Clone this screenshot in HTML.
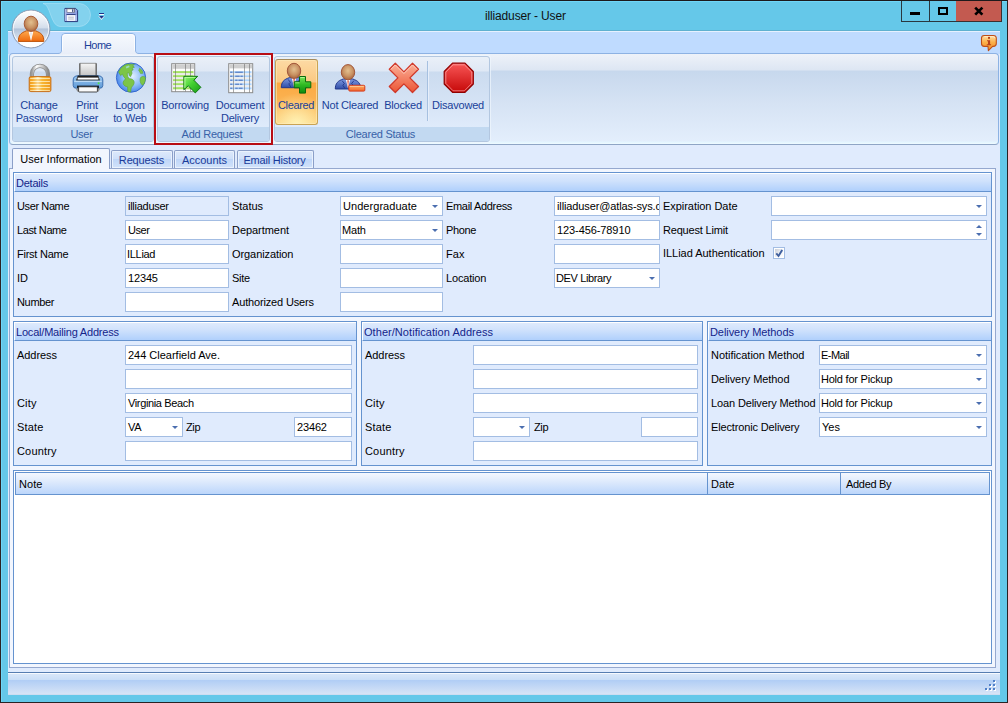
<!DOCTYPE html>
<html>
<head>
<meta charset="utf-8">
<title>illiaduser - User</title>
<style>
html,body{margin:0;padding:0;}
body{width:1008px;height:703px;overflow:hidden;background:#65c8e9;font-family:"Liberation Sans",sans-serif;font-size:11px;color:#000;position:relative;}
*{box-sizing:border-box;}
.abs{position:absolute;}
#frame{position:absolute;left:0;top:0;width:1008px;height:703px;border:1px solid #2a2324;border-top-color:#1d1a1c;}
#frame-hl{position:absolute;left:1px;top:1px;width:1006px;height:701px;border-top:1px solid #6fd6f8;border-left:1px solid #6fd6f8;}
#title{position:absolute;left:485px;top:9px;width:90px;height:15px;line-height:15px;font-size:12px;letter-spacing:-0.15px;color:#111;white-space:nowrap;}
/* window buttons */
#wbtns{position:absolute;left:901px;top:1px;width:103px;height:21px;}
#wbtns div{position:absolute;top:0;height:21px;border:1px solid #29373f;border-top:none;}
#bmin{left:0;width:29px;background:#65c8e9;}
#bmax{left:29px;width:26px;background:#65c8e9;border-left:none!important;border-right:none!important;}
#bcls{left:55px;width:46px;background:#c35a50;border-left:none!important;border-color:#3d2f30!important;}
/* client */
#client{position:absolute;left:8px;top:31px;width:992px;height:664px;background:#e0ebfd;}
#tabhdr{position:absolute;left:0;top:0;width:992px;height:23px;background:#bfdbff;border-top:1px solid #e6f1ff;}
#hometab{position:absolute;left:53px;top:3px;width:75px;height:21px;color:#1a3f99;text-align:center;line-height:23px;letter-spacing:-0.6px;padding-right:2px;z-index:3;}
#ribbon{position:absolute;left:1px;top:22px;width:990px;height:92px;border:1px solid #8db2e3;border-bottom-color:#8fa5c5;border-radius:4px;background:linear-gradient(to bottom,#eef2f9 0px,#dde6f3 16px,#c7d8ed 17px,#d6e3f4 50px,#e3eefc 87px,#e2f5ff 88px,#effaff 90px);}
.rgroup{position:absolute;top:2px;height:86px;border:1px solid #b3c7e0;border-radius:3px;background:linear-gradient(to bottom,#eaf0f8 0px,#dfe8f5 14px,#cbdbef 15px,#d5e3f5 45px,#dfebfb 70px);box-shadow:0 0 0 1px rgba(240,246,253,.7);overflow:hidden;}
.rgroup .cap{position:absolute;left:0;right:0;bottom:0;height:14px;background:#c2d9f1;color:#3862a8;text-align:center;line-height:14px;letter-spacing:-0.25px;padding-right:3px;}
.rlabel{position:absolute;letter-spacing:-0.2px;color:#1a3f99;text-align:center;line-height:13px;white-space:nowrap;}
/* tab control */
.tab{position:absolute;height:18px;top:119px;border:1px solid #8b9fc8;border-bottom:none;border-radius:2px 2px 0 0;background:linear-gradient(#dde9fb 0,#cfe0fa 45%,#bfd6f8 50%,#d2e3fb 100%);color:#1a3a98;text-align:center;line-height:19px;box-shadow:inset 0 0 0 1px #eaf2fd;}
.tab.act{top:117px;height:21px;background:#f2f6fe;color:#000;line-height:21px;box-shadow:none;border-color:#8b9fc8;}
#page{position:absolute;left:1px;top:137px;width:987px;height:500px;border:1px solid #95a8cf;background:#f2f6fe;}
#notes{position:absolute;left:5px;top:439px;width:979px;height:194px;border:1px solid #6593cf;background:#fff;}
.nh{position:absolute;top:1px;height:23px;border:1px solid #6593cf;background:linear-gradient(#f4f8ff,#dce9fc 45%,#bcd6fb);line-height:22px;padding-left:3px;}
.chk{position:absolute;width:13px;height:13px;border:1px solid #8ea7cf;background:linear-gradient(135deg,#c8d3e6,#f4f7fc);}

.grp{position:absolute;border:1px solid #6593cf;background:#e0ebfd;}
.grp .hd{position:absolute;left:0;right:0;top:0;height:19px;border:1px solid #fff;border-bottom:1px solid #6593cf;border-right:none;background:linear-gradient(#deeafd,#d0e2fc 40%,#b0d0fc);color:#14248a;line-height:18px;padding-left:1px;}
.lb{position:absolute;height:20px;line-height:21px;white-space:nowrap;}
.in{position:absolute;height:20px;border:1px solid #a3bde3;background:#fff;line-height:19px;padding-left:2px;white-space:nowrap;overflow:hidden;}
.in.ro{background:#e0ebfd;}
.dd:after{content:"";position:absolute;right:4px;top:8px;border-left:3px solid transparent;border-right:3px solid transparent;border-top:3px solid #4b6eaf;}
.spin:before{content:"";position:absolute;right:4px;top:4px;border-left:3px solid transparent;border-right:3px solid transparent;border-bottom:3px solid #4b6eaf;}
.spin:after{content:"";position:absolute;right:4px;top:12px;border-left:3px solid transparent;border-right:3px solid transparent;border-top:3px solid #4b6eaf;}
#status{position:absolute;left:0;top:641px;width:992px;height:23px;border-top:1px solid #567db1;background:linear-gradient(#f6f9fe 0,#f6f9fe 1px,#d8e6f9 1px,#c9ddf7 7px,#b0cdf5 7px,#d7e4f6 21px,#c5d6ec 22px);}
</style>
</head>
<body>
<div id="frame"></div><div id="frame-hl"></div>
<div id="title">illiaduser - User</div>
<div id="wbtns"><div id="bmin"></div><div id="bmax"></div><div id="bcls"></div></div>

<div class="abs" style="left:8px;top:30px;width:992px;height:1px;background:#5fb1d0;"></div>
<div id="client">
  <div id="tabhdr"></div>
  <svg class="abs" style="left:49px;top:1px;z-index:2" width="84" height="23" viewBox="0 0 84 23">
    <defs><linearGradient id="gTab" x1="0" x2="0" y1="0" y2="1"><stop offset="0" stop-color="#f6f9fe"/><stop offset="1" stop-color="#e8eef8"/></linearGradient></defs>
    <path d="M1 21.5 C3.5 21.5 4.5 20.5 4.5 18 V5 Q4.5 1.5 8 1.5 H75 Q78.5 1.5 78.5 5 V18 C78.5 20.5 79.5 21.5 82 21.5 V22 H1 Z" fill="url(#gTab)"/>
    <path d="M1 21.5 C3.5 21.5 4.5 20.5 4.5 18 V5 Q4.5 1.5 8 1.5 H75 Q78.5 1.5 78.5 5 V18 C78.5 20.5 79.5 21.5 82 21.5" fill="none" stroke="#8db2e3" stroke-width="1"/>
    <path d="M5.5 18.5 V5.5 Q5.5 2.5 8.5 2.5 H74.5 Q77.5 2.5 77.5 5.5 V18.5" fill="none" stroke="#ffffff" stroke-opacity=".8" stroke-width="1"/>
  </svg>
  <div id="hometab">Home</div>
  <div id="ribbon">
    <div class="rgroup" style="left:2px;width:142px;"><div class="cap">User</div></div>
    <div class="rgroup" style="left:147px;width:113px;"><div class="cap">Add Request</div></div>
    <div class="rgroup" style="left:264px;width:216px;"><div class="cap">Cleared Status</div></div>
  </div>

<!-- RIBBON ITEMS (coords relative to client: abs-8, abs-31) -->
<svg width="0" height="0" style="position:absolute"><defs>
  <linearGradient id="gGold" x1="0" x2="1" y1="0" y2="0"><stop offset="0" stop-color="#ee941c"/><stop offset=".15" stop-color="#fdb52f"/><stop offset=".4" stop-color="#fff6d2"/><stop offset=".6" stop-color="#fec63f"/><stop offset="1" stop-color="#ef981e"/></linearGradient>
  <linearGradient id="gSteel" x1="0" x2="1" y1="0" y2="0"><stop offset="0" stop-color="#9a9a9a"/><stop offset=".3" stop-color="#ffffff"/><stop offset=".7" stop-color="#c4c4c4"/><stop offset="1" stop-color="#8a8a8a"/></linearGradient>
  <linearGradient id="gPaper" x1="0" x2="0" y1="0" y2="1"><stop offset="0" stop-color="#f6f6f6"/><stop offset="1" stop-color="#bdbdbd"/></linearGradient>
  <linearGradient id="gPrn" x1="0" x2="0" y1="0" y2="1"><stop offset="0" stop-color="#9cc7f0"/><stop offset="1" stop-color="#5e9ad6"/></linearGradient>
  <radialGradient id="gGlobe" cx=".55" cy=".45" r=".6"><stop offset="0" stop-color="#e3f0ff"/><stop offset=".55" stop-color="#8dbdf7"/><stop offset="1" stop-color="#3f7fe6"/></radialGradient>
  <linearGradient id="gGreen" x1="0" x2="1" y1="0" y2="1"><stop offset="0" stop-color="#98f573"/><stop offset=".45" stop-color="#45d232"/><stop offset="1" stop-color="#189a16"/></linearGradient>
  <radialGradient id="gHead" cx=".5" cy=".4" r=".6"><stop offset="0" stop-color="#e3c08f"/><stop offset=".6" stop-color="#c99364"/><stop offset="1" stop-color="#a9663e"/></radialGradient>
  <linearGradient id="gSuit" x1="0" x2="0" y1="0" y2="1"><stop offset="0" stop-color="#7e9ae0"/><stop offset="1" stop-color="#2f4da8"/></linearGradient>
  <linearGradient id="gPlus" x1="0" x2="0" y1="0" y2="1"><stop offset="0" stop-color="#7ee35c"/><stop offset=".5" stop-color="#2fba22"/><stop offset="1" stop-color="#0f8a10"/></linearGradient>
  <linearGradient id="gMinus" x1="0" x2="0" y1="0" y2="1"><stop offset="0" stop-color="#ffb061"/><stop offset="1" stop-color="#f2672d"/></linearGradient>
  <linearGradient id="gX" x1="0" x2="0" y1="0" y2="1"><stop offset="0" stop-color="#fbb199"/><stop offset="1" stop-color="#ec5535"/></linearGradient>
  <linearGradient id="gStop" x1="0" x2="0" y1="0" y2="1"><stop offset="0" stop-color="#f85656"/><stop offset="1" stop-color="#c60808"/></linearGradient>
  <linearGradient id="gOrange" x1="0" x2="0" y1="0" y2="1"><stop offset="0" stop-color="#fda94f"/><stop offset="1" stop-color="#ef6a0d"/></linearGradient>
  <g id="userfig">
    <path d="M1.3 26 C1.3 20.5 3.6 17.8 9.6 15.9 L18.4 15.9 C24.4 17.8 26.7 20.5 26.7 26 Z" fill="url(#gSuit)" stroke="#24388a" stroke-width="1"/>
    <path d="M11.8 16.2 L14 25.6 L16.2 16.2 Z" fill="#fff"/>
    <path d="M13.4 17.4 L14 25 L14.8 17.4 Z" fill="#e0402a"/>
    <path d="M8 17.6 L10.4 20.6 L8.8 22.2 L11 25.6" fill="none" stroke="#24388a" stroke-width=".9"/>
    <path d="M20 17.6 L17.6 20.6 L19.2 22.2 L17.4 25.6" fill="none" stroke="#24388a" stroke-width=".9"/>
    <ellipse cx="14" cy="9.2" rx="6.7" ry="7.6" fill="url(#gHead)" stroke="#a3573a" stroke-width="1"/>
  </g>
</defs></svg>

<!-- Cleared highlighted button -->
<div class="abs" style="left:267px;top:28px;width:43px;height:66px;border:1px solid #c9a354;border-top-color:#a58b5c;border-radius:3px;background:radial-gradient(ellipse 75% 48% at 50% 100%,rgba(255,244,184,.95),rgba(255,238,160,0) 100%),linear-gradient(to bottom,#fddaa4 0px,#fbc982 22px,#fba942 23px,#fbb353 42px,#fdd07a 64px);box-shadow:inset 0 0 0 1px rgba(255,238,190,.55);"></div>
<!-- separator -->
<div class="abs" style="left:419px;top:30px;width:1px;height:60px;background:#a6c0e0;"></div>
<div class="abs" style="left:420px;top:30px;width:1px;height:60px;background:#e6eefa;"></div>

<!-- lock -->
<svg class="abs" style="left:15px;top:31px" width="32" height="32" viewBox="0 0 32 32">
  <path d="M8.9 16 V12 A8.05 8.05 0 0 1 25 12 V16" fill="none" stroke="#8a8a8a" stroke-width="4.2"/>
  <path d="M8.9 16 V12 A8.05 8.05 0 0 1 25 12 V16" fill="none" stroke="url(#gSteel)" stroke-width="2.8"/>
  <rect x="6.2" y="14.6" width="21.7" height="15" rx="1.6" fill="url(#gGold)" stroke="#c7701c" stroke-width="1"/>
  <g stroke="#ee9a1c" stroke-width="1.1" opacity=".7"><path d="M6.7 18h20.7M6.7 21h20.7M6.7 24h20.7M6.7 27h20.7"/></g>
  <g stroke="#fff8dc" stroke-width=".9" opacity=".75"><path d="M7.2 16.5h19.7M7.2 19.5h19.7M7.2 22.5h19.7M7.2 25.5h19.7M7.2 28.4h19.7"/></g>
</svg>
<!-- printer -->
<svg class="abs" style="left:63px;top:31px" width="34" height="32" viewBox="0 0 34 32">
  <rect x="8" y="1.3" width="18" height="15" fill="#6f6f6f"/>
  <rect x="9.2" y="1.2" width="15.6" height="14" fill="url(#gPaper)" stroke="#7e7e7e" stroke-width=".7"/>
  <path d="M2.2 18 Q2.2 13.8 7 13.8 H27 Q31.8 13.8 31.8 18 V23.5 Q31.8 26.3 28.5 26.3 H5.5 Q2.2 26.3 2.2 23.5 Z" fill="url(#gPrn)" stroke="#3c6eb0" stroke-width="1"/>
  <path d="M6.8 13.6 H27.2 L29 18.6 H5 Z" fill="#1c1c1c"/>
  <rect x="6.6" y="15.6" width="20.8" height="2" fill="#fff"/>
  <path d="M3.2 19.3 H30.8" stroke="#d4e9fb" stroke-width=".9"/>
  <circle cx="27.6" cy="21.3" r="1" fill="#4de04a"/>
  <rect x="6" y="23.6" width="22" height="2.8" fill="#15202e"/>
  <path d="M4.6 26.4 h24.8 l-2 3.4 h-20.8 z" fill="#8f8f8f"/>
  <rect x="7.6" y="24.8" width="18.8" height="5.2" rx=".8" fill="#fafafa" stroke="#222" stroke-width=".8"/>
</svg>
<!-- globe -->
<svg class="abs" style="left:107px;top:31px" width="32" height="32" viewBox="0 0 32 32">
  <circle cx="16" cy="15.6" r="14.6" fill="url(#gGlobe)" stroke="#3768cf" stroke-width="1"/>
  <path d="M3.6 10 C5.5 5.5 9 3 12.5 2 L19.5 2.4 L17.6 3.8 L19.4 5.2 L17.2 6.2 L18.2 8 L16.4 8.6 L17 11.2 L15.6 14.6 L14.2 13.4 L14 10.8 L12.2 11.2 L12.6 14.4 L14.2 16.8 C17.4 16.6 19.8 18.6 19 21.6 C18.4 24 16.2 24.6 16 27 L15.6 30 L12.8 29.6 L12.6 24.8 C10.2 24.6 7.6 22.8 8.2 20.2 C8.6 18.4 10.4 17.6 10.2 16.4 L8.4 14.2 L7.4 12 L5.6 13.6 Z" fill="#7cc548" stroke="#5ba52f" stroke-width=".6"/>
  <path d="M10.6 4.8 l3.2 -1.2 l.9 1.3 l-3.2 1.6 z" fill="#9ad8c0"/>
  <path d="M24.6 6.2 L27.2 8.6 L28 11.2 L25.6 11.6 L23.8 8.2 Z" fill="#7cc548" stroke="#5ba52f" stroke-width=".5"/>
  <path d="M27 14.6 C29 14.2 30.4 14.8 30.4 16.2 C30.4 19 29.4 21.4 28 23.2 C26 22.8 25 20 25 18 C25 16 25.8 15 27 14.6 Z" fill="#7cc548" stroke="#5ba52f" stroke-width=".5"/>
</svg>
<!-- borrowing -->
<svg class="abs" style="left:162px;top:31px" width="34" height="33" viewBox="0 0 34 33">
  <rect x="1.7" y="1.7" width="23" height="28" fill="#fdfdfd" stroke="#8b8b8b" stroke-width="1"/>
  <rect x="2.4" y="2.4" width="21.7" height="4.4" fill="#cfcfcf"/>
  <g fill="#a4e262"><rect x="3" y="9.1" width="20.5" height="2.2"/><rect x="3" y="13.1" width="20.5" height="2.2"/><rect x="3" y="17.1" width="20.5" height="2.2"/><rect x="3" y="21.1" width="20.5" height="2.2"/><rect x="3" y="25.1" width="20.5" height="2.2"/></g>
  <g fill="#ececec"><rect x="3" y="11.3" width="20.5" height="1.8"/><rect x="3" y="15.3" width="20.5" height="1.8"/><rect x="3" y="19.3" width="20.5" height="1.8"/><rect x="3" y="23.3" width="20.5" height="1.8"/></g>
  <g stroke="#707070" stroke-width="1" opacity=".6"><path d="M5.5 2v27.5M15.5 2v27.5M20.5 2v27.5"/></g>
  <path d="M13.85 14.35 L27.7 14.35 L23.8 18.2 L30.9 25.3 L25.3 30.9 L18.2 23.8 L13.85 27.75 Z" fill="url(#gGreen)" stroke="#0f7a12" stroke-width="1" stroke-linejoin="round"/>
  <path d="M14.9 26 V15.4 H25.4" stroke="#c4ffa8" stroke-width=".9" fill="none" opacity=".9"/>
</svg>
<!-- document delivery -->
<svg class="abs" style="left:219px;top:31px" width="28" height="33" viewBox="0 0 28 33">
  <rect x="1.7" y="1.7" width="24" height="29" fill="#fdfdfd" stroke="#8b8b8b" stroke-width="1"/>
  <rect x="2.4" y="2.4" width="22.7" height="4" fill="#cfcfcf"/>
  <g fill="#acd4ff"><rect x="3" y="9.2" width="21.5" height="2.2"/><rect x="3" y="13.2" width="21.5" height="2.2"/><rect x="3" y="17.2" width="21.5" height="2.2"/><rect x="3" y="21.2" width="21.5" height="2.2"/><rect x="3" y="25.2" width="21.5" height="2.2"/></g>
  <g fill="#ededed"><rect x="3" y="11.4" width="21.5" height="1.8"/><rect x="3" y="15.4" width="21.5" height="1.8"/><rect x="3" y="19.4" width="21.5" height="1.8"/><rect x="3" y="23.4" width="21.5" height="1.8"/></g>
  <g stroke="#3556a4" stroke-width="1" opacity=".85"><path d="M3.2 10.2h2.2M8.2 10.2h7.6M3.2 14.2h2.2M8.2 14.2h4.5M13.4 14.2h2.4M3.2 18.2h2.2M8.2 18.2h2.4M11.4 18.2h4.4M3.2 22.2h2.2M8.2 22.2h4M13 22.2h2.4M3.2 26.2h2.2M8.2 26.2h2.6M11.6 26.2h4"/></g>
  <g stroke="#707070" stroke-width="1" opacity=".6"><path d="M6.5 2v28.5M17.5 2v28.5M22.5 2v28.5"/></g>
</svg>
<!-- cleared -->
<svg class="abs" style="left:272px;top:31px" width="34" height="32" viewBox="0 0 34 32">
  <use href="#userfig" x="0" y="-.3"/>
  <path d="M19.5 14.5 h6 v5.3 h5.3 v6 h-5.3 v5.3 h-6 v-5.3 h-5.3 v-6 h5.3 z" fill="url(#gPlus)" stroke="#0a6a0c" stroke-width="1" stroke-linejoin="round"/>
  <path d="M20.4 15.5 h4.2 M15.2 20.8 h4.2" stroke="#c6ffae" stroke-width=".9" opacity=".8"/>
</svg>
<!-- not cleared -->
<svg class="abs" style="left:326px;top:32px" width="34" height="32" viewBox="0 0 34 32">
  <use href="#userfig" x="0" y="0"/>
  <rect x="14.8" y="22.3" width="16" height="5.8" rx="1" fill="url(#gMinus)" stroke="#d63a1c" stroke-width="1"/>
  <path d="M15.8 23.4 h14" stroke="#ffd9a8" stroke-width=".9" opacity=".8"/>
</svg>
<!-- blocked -->
<svg class="abs" style="left:380px;top:31px" width="32" height="32" viewBox="0 0 32 32">
  <path d="M7.3 1.3 L15.9 9.9 L24.5 1.3 L30.5 7.3 L21.9 15.9 L30.5 24.5 L24.5 30.5 L15.9 21.9 L7.3 30.5 L1.3 24.5 L9.9 15.9 L1.3 7.3 Z" fill="url(#gX)" stroke="#d0392a" stroke-width="1.3" stroke-linejoin="round"/>
  <path d="M2.9 7.3 L7.3 2.9 L15.9 11.5 L24.5 2.9 L28.9 7.3" fill="none" stroke="#ffd9cb" stroke-width=".9" opacity=".85"/>
</svg>
<!-- disavowed -->
<svg class="abs" style="left:435px;top:31px" width="32" height="32" viewBox="0 0 32 32">
  <path d="M9.5 1.2 H22 L30.3 9.5 V22 L22 30.3 H9.5 L1.2 22 V9.5 Z" fill="url(#gStop)" stroke="#8f0000" stroke-width="1.2" stroke-linejoin="round"/>
  <path d="M10.1 2.8 H21.4 L28.8 10.1 V21.4 L21.4 28.8 H10.1 L2.8 21.4 V10.1 Z" fill="none" stroke="#ffb0b0" stroke-width=".9" opacity=".75"/>
</svg>

<!-- labels -->
<div class="rlabel" style="left:1px;top:68px;width:60px;">Change<br>Password</div>
<div class="rlabel" style="left:59px;top:68px;width:40px;">Print<br>User</div>
<div class="rlabel" style="left:97px;top:68px;width:50px;">Logon<br>to Web</div>
<div class="rlabel" style="left:147px;top:68px;width:60px;">Borrowing</div>
<div class="rlabel" style="left:202px;top:68px;width:60px;">Document<br>Delivery</div>
<div class="rlabel" style="left:258px;top:68px;width:60px;letter-spacing:-0.35px;">Cleared</div>
<div class="rlabel" style="left:306px;top:68px;width:72px;">Not Cleared</div>
<div class="rlabel" style="left:365px;top:68px;width:60px;">Blocked</div>
<div class="rlabel" style="left:420px;top:68px;width:60px;">Disavowed</div>

<!-- red highlight rectangle -->
<div class="abs" style="left:146px;top:22px;width:119px;height:92px;border:2px solid #b80d14;z-index:4;"></div>

  <div id="page"></div>
  <div class="tab act" style="left:4px;width:98px;">User Information</div>
  <div class="tab" style="left:103px;width:62px;letter-spacing:-0.15px;padding-right:1px;">Requests</div>
  <div class="tab" style="left:166px;width:61px;">Accounts</div>
  <div class="tab" style="left:229px;width:77px;padding-right:2px;letter-spacing:-0.2px;">Email History</div>

<div class="grp" style="left:5px;top:141px;width:979px;height:145px;"><div class="hd" style="letter-spacing:-0.23px;">Details</div>
  <div class="lb" style="left:3px;top:23px;letter-spacing:-0.39px;">User Name</div>
  <div class="in ro" style="left:111px;top:23px;width:104px;letter-spacing:-0.27px;">illiaduser</div>
  <div class="lb" style="left:218px;top:23px;letter-spacing:-0.04px;">Status</div>
  <div class="in dd" style="left:326px;top:23px;width:103px;letter-spacing:0.05px;">Undergraduate</div>
  <div class="lb" style="left:432px;top:23px;letter-spacing:-0.33px;">Email Address</div>
  <div class="in " style="left:540px;top:23px;width:106px;letter-spacing:-0.12px;">illiaduser@atlas-sys.c</div>
  <div class="lb" style="left:649px;top:23px;letter-spacing:-0.05px;">Expiration Date</div>
  <div class="lb" style="left:3px;top:47px;letter-spacing:-0.4px;">Last Name</div>
  <div class="in " style="left:111px;top:47px;width:104px;letter-spacing:-0.41px;">User</div>
  <div class="lb" style="left:218px;top:47px;letter-spacing:-0.05px;">Department</div>
  <div class="in dd" style="left:326px;top:47px;width:103px;letter-spacing:-0.16px;text-indent:-1px;">Math</div>
  <div class="lb" style="left:432px;top:47px;letter-spacing:-0.35px;">Phone</div>
  <div class="in " style="left:540px;top:47px;width:106px;letter-spacing:-0.09px;">123-456-78910</div>
  <div class="lb" style="left:649px;top:47px;letter-spacing:-0.19px;">Request Limit</div>
  <div class="lb" style="left:3px;top:71px;letter-spacing:-0.25px;">First Name</div>
  <div class="in " style="left:111px;top:71px;width:104px;letter-spacing:-0.3px;text-indent:-1px;">ILLiad</div>
  <div class="lb" style="left:218px;top:71px;letter-spacing:-0.08px;">Organization</div>
  <div class="in " style="left:326px;top:71px;width:103px;"></div>
  <div class="lb" style="left:432px;top:71px;letter-spacing:0.03px;">Fax</div>
  <div class="in " style="left:540px;top:71px;width:106px;"></div>
  <div class="lb" style="left:649px;top:70px;letter-spacing:-0.03px;">ILLiad Authentication</div>
  <div class="lb" style="left:3px;top:95px;">ID</div>
  <div class="in " style="left:111px;top:95px;width:104px;letter-spacing:-0.15px;">12345</div>
  <div class="lb" style="left:218px;top:95px;letter-spacing:-0.32px;">Site</div>
  <div class="in " style="left:326px;top:95px;width:103px;"></div>
  <div class="lb" style="left:432px;top:95px;letter-spacing:-0.17px;">Location</div>
  <div class="in dd" style="left:540px;top:95px;width:106px;letter-spacing:-0.38px;text-indent:-1px;">DEV Library</div>
  <div class="lb" style="left:3px;top:119px;letter-spacing:-0.33px;">Number</div>
  <div class="in " style="left:111px;top:119px;width:104px;"></div>
  <div class="lb" style="left:218px;top:119px;letter-spacing:-0.16px;">Authorized Users</div>
  <div class="in " style="left:326px;top:119px;width:103px;"></div>
  <div class="in dd" style="left:757px;top:23px;width:216px;"></div>
  <div class="in spin" style="left:757px;top:47px;width:216px;"></div>
  <svg class="abs" style="left:759px;top:74px;" width="12" height="12" viewBox="0 0 12 12"><defs><linearGradient id="gChk" x1="0" y1="0" x2="1" y2="1"><stop offset="0" stop-color="#c9ced8"/><stop offset=".6" stop-color="#f1f3f7"/><stop offset="1" stop-color="#ffffff"/></linearGradient></defs><rect x=".5" y=".5" width="11" height="11" fill="#fff" stroke="#a3bde3"/><rect x="2" y="2" width="8" height="8" fill="url(#gChk)"/><path d="M3.3 6.4 L5.5 9 L9.2 2.9" fill="none" stroke="#3f5f9e" stroke-width="1.9" stroke-linejoin="miter"/></svg>
</div>
<div class="grp" style="left:5px;top:290px;width:344px;height:145px;"><div class="hd" style="letter-spacing:-0.2px;">Local/Mailing Address</div>
  <div class="lb" style="left:3px;top:23px;letter-spacing:-0.06px;">Address</div>
  <div class="in " style="left:111px;top:23px;width:227px;letter-spacing:-0.01px;">244 Clearfield Ave.</div>
  <div class="in " style="left:111px;top:47px;width:227px;"></div>
  <div class="lb" style="left:3px;top:71px;letter-spacing:0.18px;">City</div>
  <div class="in " style="left:111px;top:71px;width:227px;letter-spacing:-0.36px;">Virginia Beach</div>
  <div class="lb" style="left:3px;top:95px;letter-spacing:0.2px;">State</div>
  <div class="in dd" style="left:111px;top:95px;width:58px;letter-spacing:-0.36px;">VA</div>
  <div class="lb" style="left:172px;top:95px;letter-spacing:-0.39px;">Zip</div>
  <div class="in " style="left:280px;top:95px;width:58px;letter-spacing:-0.15px;">23462</div>
  <div class="lb" style="left:3px;top:119px;letter-spacing:0.16px;">Country</div>
  <div class="in " style="left:111px;top:119px;width:227px;"></div>
</div>
<div class="grp" style="left:353px;top:290px;width:342px;height:145px;"><div class="hd" style="letter-spacing:0.05px;">Other/Notification Address</div>
  <div class="lb" style="left:3px;top:23px;letter-spacing:-0.06px;">Address</div>
  <div class="in " style="left:111px;top:23px;width:225px;"></div>
  <div class="in " style="left:111px;top:47px;width:225px;"></div>
  <div class="lb" style="left:3px;top:71px;letter-spacing:0.18px;">City</div>
  <div class="in " style="left:111px;top:71px;width:225px;"></div>
  <div class="lb" style="left:3px;top:95px;letter-spacing:0.2px;">State</div>
  <div class="in dd" style="left:111px;top:95px;width:57px;"></div>
  <div class="lb" style="left:172px;top:95px;letter-spacing:-0.39px;">Zip</div>
  <div class="in " style="left:279px;top:95px;width:57px;"></div>
  <div class="lb" style="left:3px;top:119px;letter-spacing:0.16px;">Country</div>
  <div class="in " style="left:111px;top:119px;width:225px;"></div>
</div>
<div class="grp" style="left:699px;top:290px;width:285px;height:145px;"><div class="hd" style="letter-spacing:-0.07px;">Delivery Methods</div>
  <div class="lb" style="left:3px;top:23px;letter-spacing:-0.04px;">Notification Method</div>
  <div class="in dd" style="left:111px;top:23px;width:168px;letter-spacing:-0.53px;text-indent:-1px;">E-Mail</div>
  <div class="lb" style="left:3px;top:47px;letter-spacing:-0.07px;">Delivery Method</div>
  <div class="in dd" style="left:111px;top:47px;width:168px;letter-spacing:-0.22px;text-indent:-1px;">Hold for Pickup</div>
  <div class="lb" style="left:3px;top:71px;letter-spacing:-0.13px;">Loan Delivery Method</div>
  <div class="in dd" style="left:111px;top:71px;width:168px;letter-spacing:-0.22px;text-indent:-1px;">Hold for Pickup</div>
  <div class="lb" style="left:3px;top:95px;letter-spacing:-0.14px;">Electronic Delivery</div>
  <div class="in dd" style="left:111px;top:95px;width:168px;letter-spacing:0.02px;">Yes</div>
</div>
<div id="notes">
  <div class="nh" style="left:1px;width:693px;letter-spacing:0.08px;">Note</div>
  <div class="nh" style="left:693px;width:134px;letter-spacing:0.08px;">Date</div>
  <div class="nh" style="left:826px;width:150px;padding-left:5px;letter-spacing:-0.3px;">Added By</div>
</div>
  <div id="status"></div>
</div>
<!-- QAT pill, orb, save icon, dropdown, window button glyphs, info icon (absolute coords in body) -->
<svg class="abs" style="left:36px;top:2px" width="60" height="27" viewBox="0 0 60 27">
  <path d="M7 1.5 H43 A11.5 11.5 0 0 1 43 24.5 H24 C14.5 24.5 14.5 1.5 7 1.5 Z" fill="#8ed5ef" fill-opacity=".75" stroke="#a5e0f5" stroke-opacity=".7" stroke-width="1"/>
</svg>
<svg class="abs" style="left:11px;top:9px" width="40" height="40" viewBox="0 0 40 40">
  <defs>
    <linearGradient id="gOrb" x1="0" x2="0" y1="0" y2="1"><stop offset="0" stop-color="#ffffff"/><stop offset=".2" stop-color="#f0f4f9"/><stop offset=".47" stop-color="#d3ddeb"/><stop offset=".5" stop-color="#b2c3da"/><stop offset=".78" stop-color="#dbe4f0"/><stop offset=".86" stop-color="#ffffff"/><stop offset="1" stop-color="#ffffff"/></linearGradient>
  </defs>
  <circle cx="20" cy="20" r="18.9" fill="url(#gOrb)" stroke="#8796b0" stroke-width="1"/>
  <circle cx="20" cy="20" r="17.8" fill="none" stroke="#ffffff" stroke-opacity=".8" stroke-width="1"/>
  <path d="M7.4 32.4 C7.4 26 9.5 24.2 15.4 21.8 H24.6 C30.5 24.2 32.8 26 32.8 32.4 Z" fill="url(#gOrange)" stroke="#bd520a" stroke-width="1"/>
  <path d="M17.6 22.2 L20 32 L22.4 22.2 Z" fill="#fff"/>
  <path d="M19.2 23.4 L20 31 L20.8 23.4 Z" fill="#e4dcd4"/>
  <ellipse cx="20" cy="14.8" rx="6.8" ry="7.6" fill="url(#gHead)" stroke="#a85c38" stroke-width="1"/>
</svg>
<!-- save -->
<svg class="abs" style="left:64px;top:7px" width="15" height="16" viewBox="0 0 15 16">
  <defs><linearGradient id="gSave" x1="0" x2="1" y1="0" y2="1"><stop offset="0" stop-color="#a9b8ee"/><stop offset="1" stop-color="#7d8fd6"/></linearGradient></defs>
  <path d="M.9 1.4 H11.6 L13.6 3.4 V14.6 H.9 Z" fill="url(#gSave)" stroke="#2c3a7c" stroke-width="1"/>
  <path d="M1.4 2 V14" stroke="#c6d1f6" stroke-width=".8"/>
  <rect x="2.7" y="1.5" width="8" height="4" fill="#66666e"/>
  <rect x="3.3" y="2.2" width="6.6" height="2.8" fill="#fbfbfd"/>
  <rect x="8.1" y="2.3" width="1.2" height="2.6" fill="#34447e"/>
  <path d="M2.4 7.6 H11.6" stroke="#2c3a7c" stroke-width="1"/>
  <rect x="2.9" y="8.1" width="8.3" height="5.8" fill="#f7f8fc"/>
  <path d="M4.2 10.2h5.6M4.2 12h5.6" stroke="#b0b4c4" stroke-width=".9"/>
  <rect x="11.2" y="8.1" width="1.6" height="5.8" fill="#b9c6f3"/>
</svg>
<!-- qat dropdown -->
<svg class="abs" style="left:98px;top:12px" width="8" height="9" viewBox="0 0 8 9">
  <rect x="1" y="1" width="5" height="1" fill="#1c3388"/>
  <rect x="1" y="2" width="5" height="1" fill="#f2fbff"/>
  <path d="M0.4 4 H6.6 L3.5 7.9 Z" fill="#f2fbff"/>
  <path d="M1 4 H6 L3.5 6.7 Z" fill="#1c3388"/>
</svg>
<!-- window button glyphs -->
<div class="abs" style="left:910px;top:12px;width:10px;height:3px;background:#000;"></div>
<div class="abs" style="left:938px;top:7px;width:10px;height:8px;border:2px solid #000;"></div>
<svg class="abs" style="left:973px;top:6px" width="12" height="10" viewBox="0 0 12 10"><path d="M2.2 1.6 L9.4 8.6 M9.4 1.6 L2.2 8.6" stroke="#000" stroke-width="2.7"/></svg>
<!-- info bubble -->
<svg class="abs" style="left:980px;top:34px" width="18" height="18" viewBox="0 0 18 18">
  <defs><linearGradient id="gInfo" x1="0" x2="0" y1="0" y2="1"><stop offset="0" stop-color="#ffe0a6"/><stop offset=".45" stop-color="#fbb04a"/><stop offset="1" stop-color="#f08c22"/></linearGradient></defs>
  <path d="M4.2 1.5 H13.3 Q16.3 1.5 16.3 4.3 V9.6 Q16.3 12.4 13.3 12.4 H12.6 L8.4 16.6 L8 12.4 H4.2 Q1.5 12.4 1.5 9.6 V4.3 Q1.5 1.5 4.2 1.5 Z" fill="url(#gInfo)" stroke="#bf4f18" stroke-width="1.1" stroke-linejoin="round"/>
  <path d="M4.4 2.7 H13.1 Q14.9 2.7 15.1 4.2" fill="none" stroke="#fff3da" stroke-width=".9" opacity=".9"/>
  <rect x="8" y="2.9" width="2" height="1.9" fill="#b8421c"/>
  <path d="M7 6.3 h3.1 v4 h1 v1 h-4.3 v-1 h1.2 v-3 h-1 z" fill="#b8421c"/>
</svg>
<!-- resize grip -->
<svg class="abs" style="left:984px;top:679px" width="13" height="13" viewBox="0 0 13 13">
  <g fill="#ffffff"><rect x="10" y="2" width="2" height="2"/><rect x="6" y="6" width="2" height="2"/><rect x="10" y="6" width="2" height="2"/><rect x="2" y="10" width="2" height="2"/><rect x="6" y="10" width="2" height="2"/><rect x="10" y="10" width="2" height="2"/></g>
  <g fill="#4f7fc8"><rect x="9" y="1" width="2" height="2"/><rect x="5" y="5" width="2" height="2"/><rect x="9" y="5" width="2" height="2"/><rect x="1" y="9" width="2" height="2"/><rect x="5" y="9" width="2" height="2"/><rect x="9" y="9" width="2" height="2"/></g>
</svg>
</body>
</html>
